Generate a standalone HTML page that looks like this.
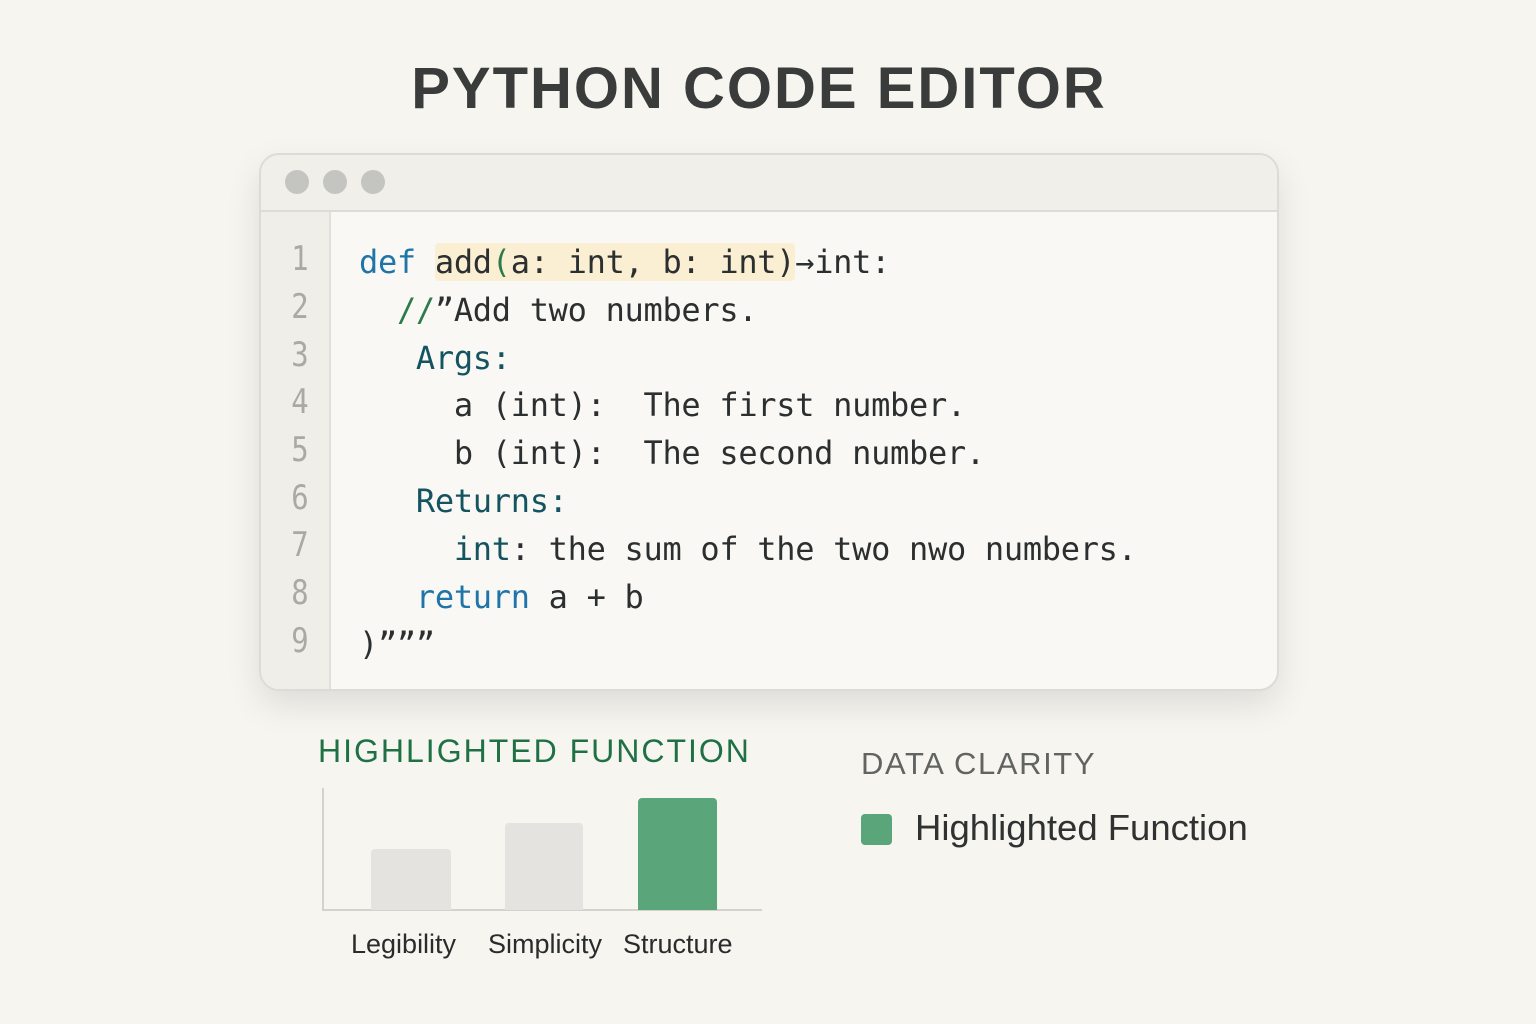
<!DOCTYPE html>
<html><head><meta charset="utf-8"><style>
*{margin:0;padding:0;box-sizing:border-box}
body{width:1536px;height:1024px;background:#f7f5f0;position:relative;overflow:hidden;font-family:"Liberation Sans","DejaVu Sans",sans-serif}
.abs{position:absolute}
h1{position:absolute;left:0;width:1518px;text-align:center;top:55px;font-size:58px;font-weight:bold;color:#393c3a;letter-spacing:2px}
.win{left:259px;top:153px;width:1020px;height:538px;border:2px solid #dcdbd6;border-radius:20px;background:#f9f8f4;box-shadow:0 14px 34px rgba(0,0,0,0.10);overflow:hidden}
.bar{position:absolute;left:0;top:0;right:0;height:57px;background:#f0efea;border-bottom:2px solid #dddcd7}
.dot{position:absolute;top:15px;width:24px;height:24px;border-radius:50%;background:#c4c4c1}
.gut{position:absolute;left:0;top:57px;width:70px;bottom:0;background:#efeee9;border-right:2px solid #e1e0db}
.ln{position:absolute;left:0;width:78px;text-align:center;font-family:"DejaVu Sans Mono",monospace;font-size:34px;color:#a9a9a6;transform:scaleX(.85)}
.code{position:absolute;font-family:"DejaVu Sans Mono",monospace;font-size:32px;letter-spacing:-0.3px;color:#2c2f30;white-space:pre;line-height:47.8px}
.kw{color:#1f74a8}.tl{color:#135460}.gr{color:#2d7a4c}
.hl{background:#fbefd3;border-radius:4px}
</style></head><body>
<h1>PYTHON CODE EDITOR</h1>
<div class="abs win">
  <div class="bar"><div class="dot" style="left:24px"></div><div class="dot" style="left:62px"></div><div class="dot" style="left:100px"></div></div>
  <div class="gut"></div>
  <div class="ln" style="top:84px">1</div>
  <div class="ln" style="top:132px">2</div>
  <div class="ln" style="top:180px">3</div>
  <div class="ln" style="top:227px">4</div>
  <div class="ln" style="top:275px">5</div>
  <div class="ln" style="top:323px">6</div>
  <div class="ln" style="top:370px">7</div>
  <div class="ln" style="top:418px">8</div>
  <div class="ln" style="top:466px">9</div>
  <div class="code" style="left:98px;top:84px"><span class="kw">def</span> <span class="hl">add<span class="gr">(</span>a: int, b: int)</span>→int:
  <span class="gr">//</span>”Add two numbers.
   <span class="tl">Args:</span>
     a (int):  The first number.
     b (int):  The second number.
   <span class="tl">Returns:</span>
     <span class="tl">int</span>: the sum of the two nwo numbers.
   <span class="kw">return</span> a + b
)”””</div>
</div>
<div class="abs" style="left:318px;top:733px;font-size:32px;color:#1f7145;letter-spacing:2px">HIGHLIGHTED FUNCTION</div>
<div class="abs" style="left:322px;top:788px;width:2px;height:123px;background:#d3d2cd"></div>
<div class="abs" style="left:322px;top:909px;width:440px;height:2px;background:#d3d2cd"></div>
<div class="abs" style="left:371px;top:849px;width:80px;height:61px;background:#e4e3df;border-radius:4px 4px 0 0"></div>
<div class="abs" style="left:505px;top:823px;width:78px;height:87px;background:#e4e3df;border-radius:4px 4px 0 0"></div>
<div class="abs" style="left:638px;top:798px;width:79px;height:112px;background:#5aa57a;border-radius:4px 4px 0 0"></div>
<div class="abs" style="left:351px;top:929px;font-size:27px;color:#2a2c2b">Legibility</div>
<div class="abs" style="left:488px;top:929px;font-size:27px;color:#2a2c2b">Simplicity</div>
<div class="abs" style="left:623px;top:929px;font-size:27px;color:#2a2c2b">Structure</div>
<div class="abs" style="left:861px;top:746px;font-size:31px;color:#626461;letter-spacing:1.6px">DATA CLARITY</div>
<div class="abs" style="left:861px;top:814px;width:31px;height:31px;background:#5aa57a;border-radius:4px"></div>
<div class="abs" style="left:915px;top:807px;font-size:36.5px;color:#2f3231">Highlighted Function</div>
</body></html>
